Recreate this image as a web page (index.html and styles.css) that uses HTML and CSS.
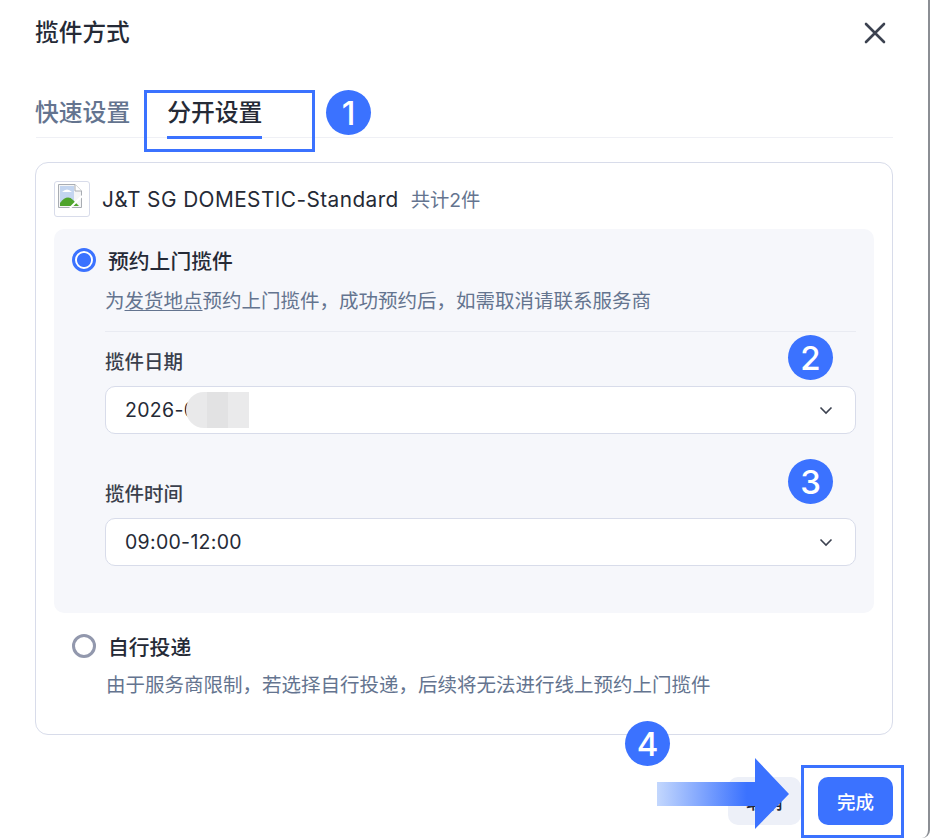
FILE: index.html
```html
<!DOCTYPE html>
<html lang="zh">
<head>
<meta charset="utf-8">
<title>揽件方式</title>
<link rel="stylesheet" href="styles.css">
</head>
<body>
<div class="dialog">
  <header class="head">
    <h1 class="title">揽件方式</h1>
    <svg class="close" width="24" height="24" viewBox="0 0 24 24"><path d="M3 3 L21 21 M21 3 L3 21" fill="none" stroke="#3c4250" stroke-width="2.6" stroke-linecap="round"/></svg>
  </header>
  <nav class="tabs">
    <span class="tab">快速设置</span>
    <span class="tab active">分开设置</span>
  </nav>
  <section class="card">
    <div class="carrier">
      <span class="logo">
        <svg width="24" height="24" viewBox="0 0 24 24">
          <path d="M0.5 0.5 H17 L23.5 7 V23.5 H0.5 Z" fill="#f4f5f6" stroke="#a9adb3"/>
          <path d="M17 0.5 V7 H23.5" fill="#fff" stroke="#a9adb3"/>
          <rect x="2" y="2" width="14" height="20" fill="#c3d5f0"/>
          <path d="M4 8 q5 -5 10 0 z" fill="#fff"/>
          <path d="M2 22 V19 q7 -9 13 -3 l6 6 z" fill="#4fa42c"/>
          <path d="M12 24 L24 12" stroke="#fff" stroke-width="2"/>
        </svg>
      </span>
      <span class="carrier-name">J&amp;T SG DOMESTIC-Standard</span>
      <span class="count">共计2件</span>
    </div>
    <div class="panel">
      <div class="radio-row">
        <span class="radio on"></span>
        <span class="radio-label">预约上门揽件</span>
      </div>
      <div class="panel-body">
        <p class="desc rule">为<u>发货地点</u>预约上门揽件，成功预约后，如需取消请联系服务商</p>
        <div class="field">
          <label class="label">揽件日期</label>
          <div class="select">
            <span class="value">2026-0</span>
            <span class="blur"></span>
            <svg class="chev" width="14" height="14" viewBox="0 0 14 14"><path d="M1.5 4.5 L7 10 L12.5 4.5" fill="none" stroke="#3c4250" stroke-width="1.6"/></svg>
          </div>
        </div>
        <div class="field second">
          <label class="label">揽件时间</label>
          <div class="select">
            <span class="value">09:00-12:00</span>
            <svg class="chev" width="14" height="14" viewBox="0 0 14 14"><path d="M1.5 4.5 L7 10 L12.5 4.5" fill="none" stroke="#3c4250" stroke-width="1.6"/></svg>
          </div>
        </div>
      </div>
    </div>
    <div class="self">
      <div class="radio-row">
        <span class="radio"></span>
        <span class="radio-label">自行投递</span>
      </div>
      <p class="desc self-desc">由于服务商限制，若选择自行投递，后续将无法进行线上预约上门揽件</p>
    </div>
  </section>
  <footer class="foot">
    <button class="btn cancel">取消</button>
    <button class="btn primary">完成</button>
  </footer>
</div>

<span class="mark m1"></span>
<span class="mark m2"></span>
<span class="badge b1">1</span>
<span class="badge b2">2</span>
<span class="badge b3">3</span>
<span class="badge b4">4</span>
<svg class="arrow" width="150" height="72" viewBox="0 0 150 72">
  <defs><linearGradient id="g" x1="0" x2="1" y1="0" y2="0"><stop offset="0" stop-color="#c3d7fd"/><stop offset="0.68" stop-color="#3b72ff"/></linearGradient></defs>
  <path d="M0 24 H98 V0 L132 36 L98 71 V48 H0 Z" fill="url(#g)"/>
</svg>
</body>
</html>
```
FILE: styles.css
```css
* { box-sizing: border-box; }
html, body { margin: 0; padding: 0; }
body {
  width: 930px;
  height: 838px;
  position: relative;
  overflow: hidden;
  background: #fff;
  font-family: Inter, "Noto Sans CJK SC", sans-serif;
  color: #252a36;
}
.dialog {
  height: 838px;
  padding: 0 35px 0 36px;
  border-right: 2px solid #8b8e94;
  border-bottom-right-radius: 8px;
  display: flex;
  flex-direction: column;
}
.head {
  height: 66px;
  display: flex;
  align-items: center;
  justify-content: space-between;
}
.title { margin: 0 0 0 -1px; font-size: 23.7px; font-weight: 500; line-height: 32px; }
.close { margin-right: 6px; }
.tabs {
  height: 72px;
  display: flex;
  gap: 37px;
  border-bottom: 1px solid #eff0f5;
  padding-top: 29px;
}
.tab { font-size: 23.8px; font-weight: 500; line-height: 36px; height: 43px; color: #64748f; margin-left: -1px; }
.tab.active { color: #252a36; border-bottom: 3px solid #3b72ff; position: relative; z-index: 1; height: 44px; margin-left: 0; }
.card {
  margin-top: 24px;
  width: 858px;
  margin-left: -1px;
  height: 573px;
  border: 1px solid #d8dcea;
  border-radius: 13px;
  padding: 18px 18px 0;
}
.carrier { display: flex; align-items: center; height: 36px; }
.logo {
  width: 36px;
  height: 36px;
  border: 1px solid #d8dcea;
  border-radius: 3px;
  display: flex;
  align-items: flex-start;
  justify-content: flex-start;
  padding: 2px 0 0 3px;
}
.carrier-name { margin-left: 12px; font-size: 20.8px; letter-spacing: 0.44px; }
.count { margin-left: 12px; font-size: 19.3px; color: #64748f; }
.panel {
  margin-top: 12px;
  height: 384px;
  background: #f6f7fb;
  border-radius: 10px;
  padding: 16px 18px 0;
}
.radio-row { display: flex; align-items: center; height: 30px; }
.radio {
  width: 24px;
  height: 24px;
  border-radius: 50%;
  border: 3px solid #9298ad;
  background: #fff;
  flex: none;
}
.radio.on { border-color: #3b72ff; background: radial-gradient(circle, #3b72ff 0 6.5px, #fff 7.5px); }
.radio-label { margin-left: 12px; font-size: 20.8px; font-weight: 500; }
.panel-body { padding: 0 0 0 33px; }
.desc { margin: 0; font-size: 19.5px; line-height: 30px; color: #64748f; }
.desc u { text-underline-offset: 2px; }
.rule { margin-top: 11px; height: 46px; border-bottom: 1px solid #e9ebf2; }
.field { margin-top: 15px; }
.field.second { margin-top: 45px; }
.label { display: block; font-size: 19.5px; line-height: 30px; font-weight: 500; color: #3a3f4c; }
.select {
  position: relative;
  margin-top: 9px;
  height: 48px;
  background: #fff;
  border: 1px solid #d8dcea;
  border-radius: 10px;
  display: flex;
  align-items: center;
  justify-content: space-between;
  padding: 0 22px 0 19px;
}
.value { font-size: 19.5px; letter-spacing: 0.3px; }
.blur {
  position: absolute;
  left: 80px;
  top: 5px;
  width: 63px;
  height: 36px;
  background: linear-gradient(90deg, #e9e9ea 0 33%, #e2e2e3 33% 66%, #eaeaeb 66%);
  border-radius: 18px 0 0 18px;
}
.self { padding: 0 0 0 18px; margin-top: 18px; }
.self-desc { margin-top: 9px; margin-left: 34px; }
.foot {
  margin-top: 42px;
  display: flex;
  justify-content: flex-end;
  gap: 17px;
}
.btn {
  width: 75px;
  height: 48px;
  border: 0;
  border-radius: 10px;
  font: 500 18.5px Inter, "Noto Sans CJK SC", sans-serif;
  padding: 0;
}
.cancel { width: 73px; background: #edf0f8; color: #252a36; }
.primary { background: #3b72ff; color: #fff; }
.mark { position: absolute; border: 3px solid #3b72ff; }
.m1 { left: 144px; top: 90px; width: 171px; height: 62px; }
.m2 { left: 801px; top: 765px; width: 103px; height: 73px; }
.badge {
  position: absolute;
  width: 45px;
  height: 45px;
  border-radius: 50%;
  background: #3b72ff;
  color: #fff;
  font-size: 33px;
  font-weight: 500;
  display: flex;
  align-items: center;
  justify-content: center;
}
.b1 { left: 326px; top: 90px; }
.b2 { left: 788px; top: 335px; }
.b3 { left: 788px; top: 459px; }
.b4 { left: 625px; top: 721px; }
.arrow { position: absolute; left: 657px; top: 758px; }
```
